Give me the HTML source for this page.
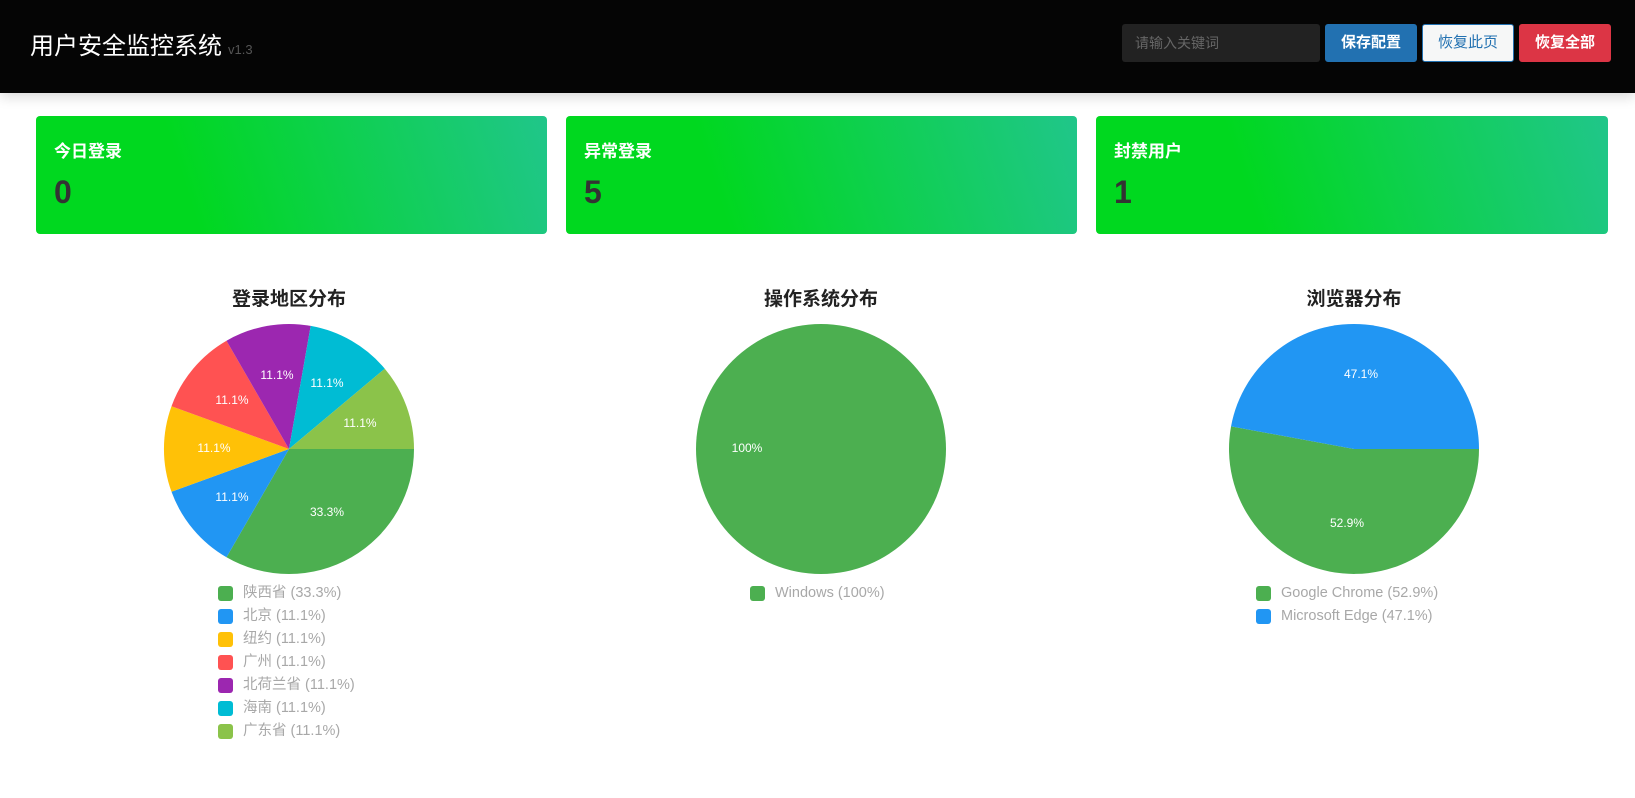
<!DOCTYPE html>
<html><head><meta charset="utf-8"><style>
*{margin:0;padding:0;box-sizing:border-box}
body{width:1635px;height:798px;background:#fff;font-family:"Liberation Sans","Noto Sans CJK SC",sans-serif;position:relative;overflow:hidden}
.hdr{position:absolute;left:0;top:0;width:1635px;height:93px;background:#050505;box-shadow:0 4px 12px rgba(0,0,0,.15)}
.title{position:absolute;left:30px;top:26px;color:#fff;font-size:24px}
.title span{font-size:13px;color:#555;margin-left:6px}
.inp{position:absolute;left:1122px;top:24px;width:198px;height:38px;background:#222;border-radius:3px;color:#666;font-size:14px;line-height:38px;padding-left:13px}
.btn{position:absolute;top:24px;height:38px;border-radius:3px;font-size:15px;line-height:36px;text-align:center;width:92px}
.card{position:absolute;top:116px;height:118px;border-radius:4px;background:linear-gradient(72deg,#00d81f 30%,#20c68a 100%);color:#fff}
.card .l{position:absolute;left:18px;top:21px;font-size:17px;font-weight:bold}
.card .n{position:absolute;left:18px;top:58px;font-size:32px;font-weight:bold;color:#333}
.ct{position:absolute;top:284px;width:300px;text-align:center;font-size:19px;font-weight:bold;color:#222}
.lg{position:absolute;font-size:14.5px;color:#a8a8a8;line-height:23px}
.lg div{position:relative;padding-left:25px;height:23px}
.lg i{position:absolute;left:0;top:4px;width:15px;height:15px;border-radius:3px}
</style></head><body>
<div class="hdr">
<div class="title">用户安全监控系统<span>v1.3</span></div>
<div class="inp">请输入关键词</div>
<div class="btn" style="left:1325px;background:#2271b1;color:#fff;border:1px solid #2271b1;font-weight:bold">保存配置</div>
<div class="btn" style="left:1422px;background:#f6f7f7;color:#2271b1;border:1px solid #2271b1">恢复此页</div>
<div class="btn" style="left:1519px;background:#dc3545;color:#fff;border:1px solid #dc3545;font-weight:bold">恢复全部</div>
</div>
<div class="card" style="left:36px;width:511px"><div class="l">今日登录</div><div class="n">0</div></div>
<div class="card" style="left:566px;width:511px"><div class="l">异常登录</div><div class="n">5</div></div>
<div class="card" style="left:1096px;width:512px"><div class="l">封禁用户</div><div class="n">1</div></div>
<div class="ct" style="left:139px">登录地区分布</div>
<div class="ct" style="left:671px">操作系统分布</div>
<div class="ct" style="left:1204px">浏览器分布</div>
<svg style="position:absolute;left:0;top:0" width="1635" height="798" font-family="Liberation Sans" font-size="12" fill="#fff">
<path d="M289 449L414 449A125 125 0 0 1 226.5 557.3Z" fill="#4caf50"/>
<path d="M289 449L226.5 557.3A125 125 0 0 1 171.5 491.8Z" fill="#2196f3"/>
<path d="M289 449L171.5 491.8A125 125 0 0 1 171.5 406.2Z" fill="#ffc107"/>
<path d="M289 449L171.5 406.2A125 125 0 0 1 226.5 340.7Z" fill="#ff5252"/>
<path d="M289 449L226.5 340.7A125 125 0 0 1 310.7 325.9Z" fill="#9c27b0"/>
<path d="M289 449L310.7 325.9A125 125 0 0 1 384.8 368.7Z" fill="#00bcd4"/>
<path d="M289 449L384.8 368.7A125 125 0 0 1 414 449Z" fill="#8bc34a"/>
<g text-anchor="middle">
<text x="327" y="516">33.3%</text>
<text x="232" y="501">11.1%</text>
<text x="214" y="452">11.1%</text>
<text x="232" y="404">11.1%</text>
<text x="277" y="379">11.1%</text>
<text x="327" y="387">11.1%</text>
<text x="360" y="427">11.1%</text>
</g>
<circle cx="821" cy="449" r="125" fill="#4caf50"/>
<text x="747" y="452" text-anchor="middle">100%</text>
<path d="M1354 449L1479 449A125 125 0 1 1 1231.05 426.4Z" fill="#4caf50"/>
<path d="M1354 449L1231.05 426.4A125 125 0 0 1 1479 449Z" fill="#2196f3"/>
<text x="1361" y="378" text-anchor="middle">47.1%</text>
<text x="1347" y="527" text-anchor="middle">52.9%</text>
</svg>
<div class="lg" style="left:218px;top:582px">
<div><i style="background:#4caf50"></i>陕西省 (33.3%)</div>
<div><i style="background:#2196f3"></i>北京 (11.1%)</div>
<div><i style="background:#ffc107"></i>纽约 (11.1%)</div>
<div><i style="background:#ff5252"></i>广州 (11.1%)</div>
<div><i style="background:#9c27b0"></i>北荷兰省 (11.1%)</div>
<div><i style="background:#00bcd4"></i>海南 (11.1%)</div>
<div><i style="background:#8bc34a"></i>广东省 (11.1%)</div>
</div>
<div class="lg" style="left:750px;top:582px">
<div><i style="background:#4caf50"></i>Windows (100%)</div>
</div>
<div class="lg" style="left:1256px;top:582px">
<div><i style="background:#4caf50"></i>Google Chrome (52.9%)</div>
<div><i style="background:#2196f3"></i>Microsoft Edge (47.1%)</div>
</div>
</body></html>
